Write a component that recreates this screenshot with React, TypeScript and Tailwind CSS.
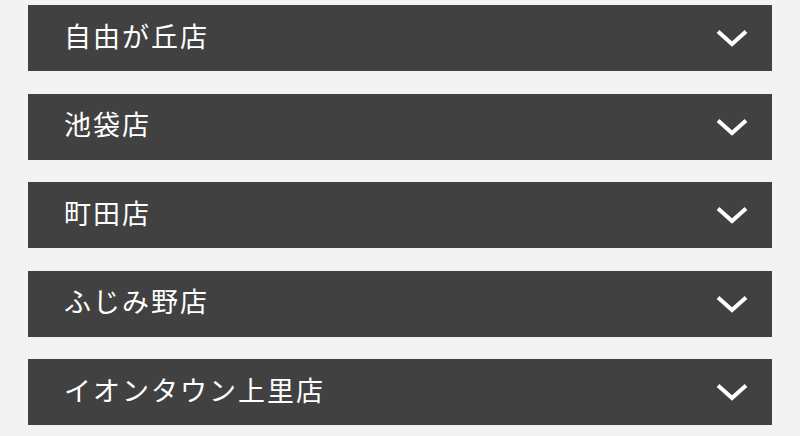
const stores = ["自由が丘店", "池袋店", "町田店", "ふじみ野店", "イオンタウン上里店"];

function Chevron() {
  return (
    <svg width="32" height="18" viewBox="0 0 32 18" fill="none" className="shrink-0">
      <path d="M2 2.5 L16 15 L30 2.5" stroke="white" strokeWidth="4" />
    </svg>
  );
}

export default function App() {
  return (
    <div className="min-h-[436px] bg-[#f3f3f3] px-[28px] pt-[5px]">
      <ul className="flex flex-col gap-[22.5px]">
        {stores.map((name) => (
          <li key={name}>
            <button className="flex h-[66px] w-full items-center justify-between bg-[#414141] pl-[36px] pr-[24px] text-left">
              <span
                className="mb-[4px] text-[27px] tracking-[2px] text-white"
                style={{ fontFamily: '"Noto Sans CJK JP", sans-serif' }}
              >
                {name}
              </span>
              <Chevron />
            </button>
          </li>
        ))}
      </ul>
    </div>
  );
}
